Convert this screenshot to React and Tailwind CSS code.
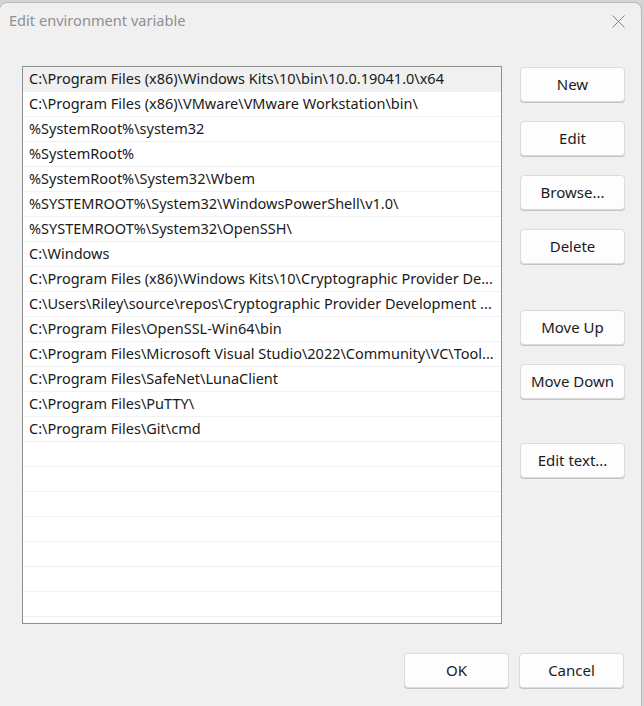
import { X } from "lucide-react";

const paths = [
  "C:\\Program Files (x86)\\Windows Kits\\10\\bin\\10.0.19041.0\\x64",
  "C:\\Program Files (x86)\\VMware\\VMware Workstation\\bin\\",
  "%SystemRoot%\\system32",
  "%SystemRoot%",
  "%SystemRoot%\\System32\\Wbem",
  "%SYSTEMROOT%\\System32\\WindowsPowerShell\\v1.0\\",
  "%SYSTEMROOT%\\System32\\OpenSSH\\",
  "C:\\Windows",
  "C:\\Program Files (x86)\\Windows Kits\\10\\Cryptographic Provider De...",
  "C:\\Users\\Riley\\source\\repos\\Cryptographic Provider Development ...",
  "C:\\Program Files\\OpenSSL-Win64\\bin",
  "C:\\Program Files\\Microsoft Visual Studio\\2022\\Community\\VC\\Tool...",
  "C:\\Program Files\\SafeNet\\LunaClient",
  "C:\\Program Files\\PuTTY\\",
  "C:\\Program Files\\Git\\cmd",
];

const DialogButton = ({ children, className = "" }) => (
  <button
    className={`h-[35px] w-[105px] rounded-[4px] border border-[#dcdcdc] bg-[#fdfdfd] text-[15px] text-[#1b1b1b] shadow-[0_1px_0_#c4c4c4] ${className}`}
  >
    {children}
  </button>
);

export default function App() {
  const rows = [...paths, ...Array(9).fill("")];

  return (
    <div
      className="h-[706px] w-[644px] overflow-hidden bg-[#d4d4d4] pt-[2px]"
      style={{ fontFamily: '"Segoe UI", "Noto Sans", sans-serif' }}
    >
      <div className="ml-[-1px] h-[720px] w-[643px] rounded-t-[8px] border border-[#b9b9b9] bg-[#f0f0f0]">
        <div className="flex h-[36px] items-center justify-between pl-[9px] pr-[11px]">
          <span className="text-[14.6px] text-[#8f8f8f]">Edit environment variable</span>
          <X className="h-[23px] w-[23px] text-[#808080]" strokeWidth={1} />
        </div>

        <div className="flex pt-[27px] pl-[22px]">
          <div className="h-[558px] w-[480px] overflow-hidden border border-[#8f8f8f] bg-white">
            {rows.map((p, i) => (
              <div
                key={i}
                className={`flex h-[25px] items-center overflow-hidden border-b border-[#f1f1f1] pl-[6px] text-[14.5px] text-[#1a1a1a] whitespace-nowrap ${
                  i === 0 ? "bg-[#f0f0f0]" : ""
                }`}
              >
                {p}
              </div>
            ))}
          </div>

          <div className="ml-[18px] flex flex-col pt-[1px]">
            <DialogButton>New</DialogButton>
            <DialogButton className="mt-[19px]">Edit</DialogButton>
            <DialogButton className="mt-[19px]">Browse...</DialogButton>
            <DialogButton className="mt-[19px]">Delete</DialogButton>
            <DialogButton className="mt-[46px]">Move Up</DialogButton>
            <DialogButton className="mt-[19px]">Move Down</DialogButton>
            <DialogButton className="mt-[44px]">Edit text...</DialogButton>
          </div>
        </div>

        <div className="flex justify-end gap-[10px] pr-[17px] pt-[29px]">
          <DialogButton>OK</DialogButton>
          <DialogButton>Cancel</DialogButton>
        </div>
      </div>
    </div>
  );
}
